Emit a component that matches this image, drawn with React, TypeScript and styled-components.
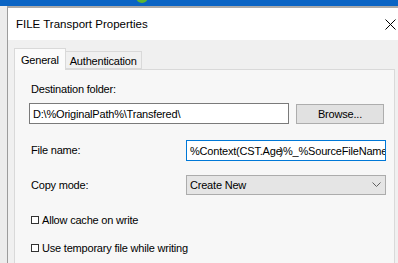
import React from 'react'
import styled, { createGlobalStyle } from 'styled-components'

const Global = createGlobalStyle`
  html, body {
    margin: 0;
    height: 100%;
    overflow: hidden;
    background: #ececec;
  }
  #root { height: 100%; }
  * { box-sizing: border-box; }
`

const Desktop = styled.div`
  height: 100%;
  display: flex;
  flex-direction: column;
  font-family: 'Liberation Sans', Arial, sans-serif;
  font-size: 11px;
  letter-spacing: -0.2px;
  color: #000;
`

const TaskStrip = styled.div`
  height: 6px;
  flex: none;
  background: #0a64c4;
  display: flex;
  overflow: hidden;
`

const StatusDot = styled.span`
  width: 12px;
  height: 12px;
  margin: -9px 0 0 136px;
  border-radius: 50%;
  background: #5bb531;
`

const Stage = styled.div`
  flex: 1;
  display: flex;
  min-height: 0;
`

const Gutter = styled.div`
  width: 7px;
  flex: none;
  background: #ececec;
`

const Dialog = styled.div`
  flex: 1;
  display: flex;
  flex-direction: column;
  border-top: 2px solid #a9a9a9;
  border-left: 1px solid #9c9c9c;
  background: #f0f0f0;
  min-width: 0;
`

const TitleBar = styled.div`
  height: 32px;
  flex: none;
  background: #fff;
  display: flex;
  align-items: center;
  justify-content: space-between;
  padding: 0 2px 0 8px;
  font-size: 11.5px;
  letter-spacing: 0;
`

const Body = styled.div`
  flex: 1;
  display: flex;
  flex-direction: column;
  padding: 7px 3px 0 6px;
  min-height: 0;
`

const TabStrip = styled.div`
  display: flex;
  align-items: flex-end;
  height: 22px;
  flex: none;
`

const Tab = styled.div<{ $active?: boolean }>`
  height: ${p => (p.$active ? '22px' : '18px')};
  padding: 0 ${p => (p.$active ? '6px' : '4px')};
  display: flex;
  align-items: center;
  padding-top: ${p => (p.$active ? '0' : '1px')};
  border: 1px solid #d9d9d9;
  border-bottom: ${p => (p.$active ? 'none' : '1px solid #d9d9d9')};
  border-left: ${p => (p.$active ? '1px solid #d9d9d9' : 'none')};
  background: ${p => (p.$active ? '#fbfbfb' : '#f0f0f0')};
  margin-bottom: ${p => (p.$active ? '-1px' : '0')};
  position: relative;
  z-index: ${p => (p.$active ? 1 : 0)};
`

const Panel = styled.div`
  flex: 1;
  border: 1px solid #d9d9d9;
  border-bottom: none;
  background: #f7f7f7;
  padding: 12px 0 0 15px;
  display: flex;
  flex-direction: column;
`

const Label = styled.div`
  line-height: 15px;
  padding-left: 1px;
`

const Line = styled.div<{ $gap: number }>`
  display: flex;
  align-items: center;
  margin-top: ${p => p.$gap}px;
`

const FieldRow = styled.div<{ $gap: number }>`
  display: grid;
  grid-template-columns: 156px 200px;
  align-items: center;
  margin-top: ${p => p.$gap}px;
`

const TextBox = styled.div<{ $width?: number; $focused?: boolean }>`
  width: ${p => (p.$width ? `${p.$width}px` : '100%')};
  height: 21px;
  border: 1px solid ${p => (p.$focused ? '#0078d7' : '#7a7a7a')};
  background: #fff;
  padding: 0 3px;
  display: flex;
  align-items: center;
  white-space: nowrap;
  overflow: hidden;
`

const Caret = styled.span`
  display: inline-block;
  width: 1px;
  height: 13px;
  background: #000;
  margin-right: -2px;
  position: relative;
  z-index: 1;
`

const Button = styled.div`
  width: 88px;
  height: 20px;
  margin-left: 7px;
  border: 1px solid #adadad;
  background: #e1e1e1;
  display: flex;
  align-items: center;
  justify-content: center;
`

const Select = styled.div`
  height: 20px;
  border: 1px solid #acacac;
  background: #e5e5e5;
  display: flex;
  align-items: center;
  justify-content: space-between;
  padding: 0 4px 0 3px;
`

const Check = styled.label<{ $gap: number }>`
  display: flex;
  align-items: center;
  gap: 3px;
  margin-top: ${p => p.$gap}px;
  line-height: 14px;
`

const Box = styled.span`
  width: 8px;
  height: 8px;
  border: 1px solid #333;
  background: #fff;
  margin-left: 1px;
`

const Chevron = () => (
  <svg width="9" height="6" viewBox="0 0 9 6">
    <polyline points="0.5,0.5 4.5,4.5 8.5,0.5" fill="none" stroke="#606060" strokeWidth="1" />
  </svg>
)

const CloseIcon = () => (
  <svg width="11" height="11" viewBox="0 0 11 11">
    <path d="M0.5 0.5 L10.5 10.5 M10.5 0.5 L0.5 10.5" stroke="#000" strokeWidth="1" />
  </svg>
)

export default function App() {
  return (
    <Desktop>
      <Global />
      <TaskStrip>
        <StatusDot />
      </TaskStrip>
      <Stage>
        <Gutter />
        <Dialog>
          <TitleBar>
            <span>FILE Transport Properties</span>
            <CloseIcon />
          </TitleBar>
          <Body>
            <TabStrip>
              <Tab $active>General</Tab>
              <Tab>Authentication</Tab>
            </TabStrip>
            <Panel>
              <Label>Destination folder:</Label>
              <Line $gap={6}>
                <TextBox $width={260} style={{ marginLeft: -1 }}>D:\%OriginalPath%\Transfered\</TextBox>
                <Button>Browse...</Button>
              </Line>
              <FieldRow $gap={16}>
                <Label>File name:</Label>
                <TextBox $focused>
                  %Context(CST.Age<Caret />)%_%SourceFileName%
                </TextBox>
              </FieldRow>
              <FieldRow $gap={14}>
                <Label>Copy mode:</Label>
                <Select>
                  <span>Create New</span>
                  <Chevron />
                </Select>
              </FieldRow>
              <Check $gap={18}>
                <Box />
                Allow cache on write
              </Check>
              <Check $gap={14}>
                <Box />
                Use temporary file while writing
              </Check>
            </Panel>
          </Body>
        </Dialog>
      </Stage>
    </Desktop>
  )
}
